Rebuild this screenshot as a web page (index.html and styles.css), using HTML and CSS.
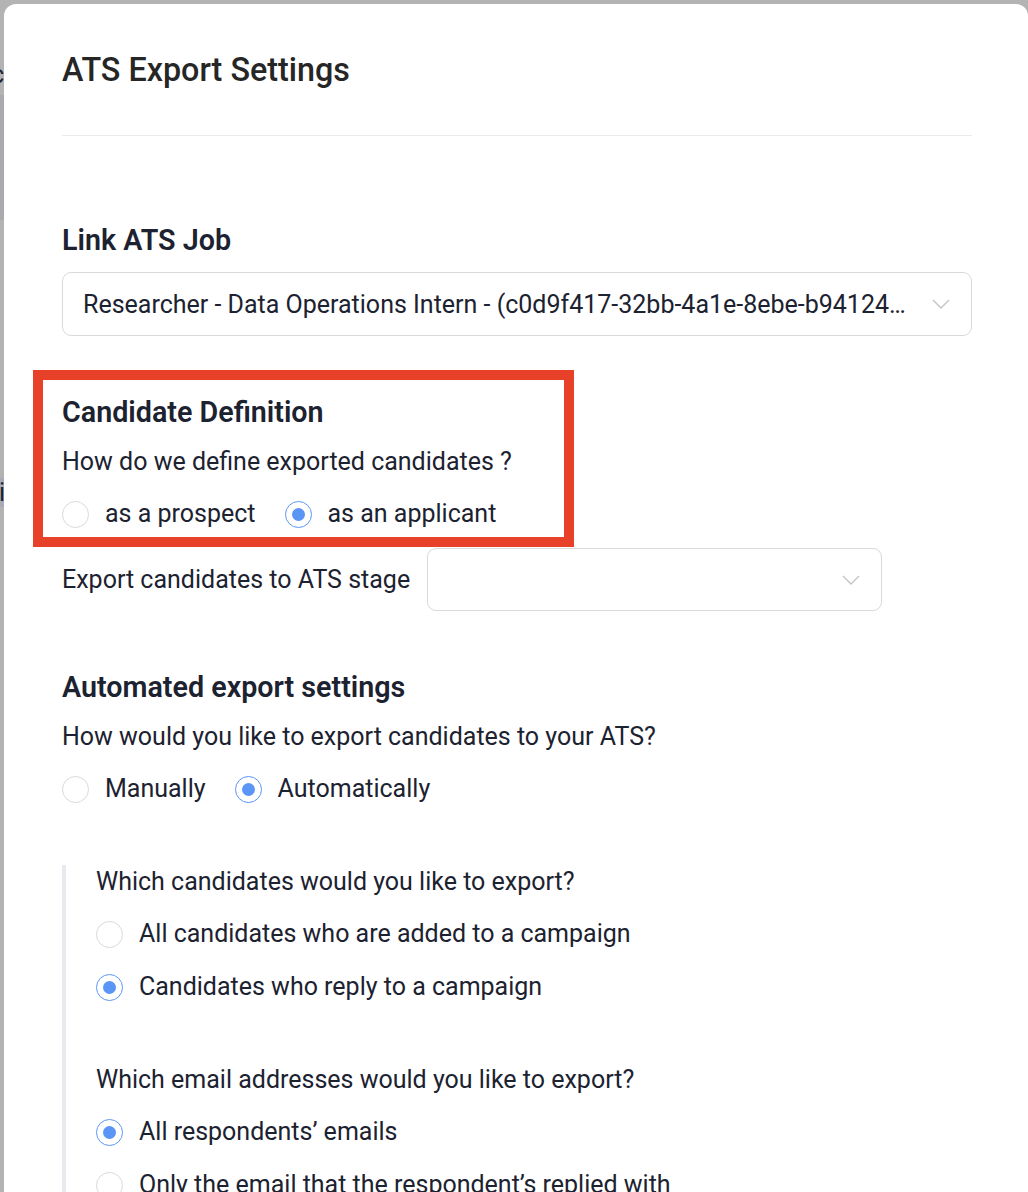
FILE: index.html
```html
<!DOCTYPE html>
<html>
  <head>
    <meta charset="utf-8">
    <title>ATS Export Settings</title>
    <link rel="stylesheet" href="styles.css">
  </head>
  <body>
    <div class="backdrop">
      <span class="backdrop-c">c</span>
      <span class="backdrop-i">i</span>
    </div>
    <div class="modal">
      <div class="modal-header">
        <h1 class="modal-title">ATS Export Settings</h1>
      </div>
      <div class="modal-body">
        <section class="block">
          <h2 class="block-title">Link ATS Job</h2>
          <div class="select select-wide">
            <span class="select-value">Researcher - Data Operations Intern - (c0d9f417-32bb-4a1e-8ebe-b94124a7d1e3)</span>
            <svg class="chevron" width="18" height="10" viewBox="0 0 18 10"><path d="M1 1 L9 9 L17 1" fill="none" stroke="#c4c4c4" stroke-width="1.4"/></svg>
          </div>
        </section>

        <section class="block block-flagged">
          <h2 class="block-title">Candidate Definition</h2>
          <p class="question">How do we define exported candidates ?</p>
          <div class="radio-group">
            <label class="radio"><span class="radio-dot"></span>as a prospect</label>
            <label class="radio checked"><span class="radio-dot"></span>as an applicant</label>
          </div>
        </section>

        <div class="stage-row">
          <span class="stage-label">Export candidates to ATS stage</span>
          <div class="select select-stage">
            <span class="select-value"></span>
            <svg class="chevron" width="18" height="10" viewBox="0 0 18 10"><path d="M1 1 L9 9 L17 1" fill="none" stroke="#c4c4c4" stroke-width="1.4"/></svg>
          </div>
        </div>

        <section class="block block-auto">
          <h2 class="block-title">Automated export settings</h2>
          <p class="question">How would you like to export candidates to your ATS?</p>
          <div class="radio-group">
            <label class="radio"><span class="radio-dot"></span>Manually</label>
            <label class="radio checked"><span class="radio-dot"></span>Automatically</label>
          </div>
        </section>

        <div class="nested">
          <p class="question">Which candidates would you like to export?</p>
          <div class="radio-list">
            <label class="radio"><span class="radio-dot"></span>All candidates who are added to a campaign</label>
            <label class="radio checked"><span class="radio-dot"></span>Candidates who reply to a campaign</label>
          </div>
          <p class="question question-spaced">Which email addresses would you like to export?</p>
          <div class="radio-list">
            <label class="radio checked"><span class="radio-dot"></span>All respondents’ emails</label>
            <label class="radio"><span class="radio-dot"></span>Only the email that the respondent’s replied with</label>
          </div>
        </div>
      </div>
    </div>
  </body>
</html>
```
FILE: styles.css
```css
:root {
  --color-text: #1c2230;
  --color-title: #262626;
  --color-border: #d9d9d9;
  --color-divider: #ebebeb;
  --color-primary: #5b95f5;
  --color-flag: #e8412a;
  --color-nested: #e8e9ee;
  --color-backdrop: #b3b3b3;
}

html, body {
  height: 100%;
}

body {
  margin: 0;
  background: var(--color-backdrop);
  font-family: Roboto, "Liberation Sans", sans-serif;
  color: var(--color-text);
  overflow: hidden;
}

.backdrop {
  position: absolute;
  left: 0;
  top: 0;
  width: 4px;
  height: 100%;
}

.backdrop::before {
  content: "";
  position: absolute;
  left: 0;
  top: 95px;
  width: 4px;
  height: 125px;
  background: #a9aaae;
}

.backdrop-c, .backdrop-i {
  position: absolute;
  font-size: 25px;
  color: var(--color-text);
}

.backdrop-c {
  left: -9px;
  top: 60px;
}

.backdrop-i {
  left: -3px;
  top: 478px;
  background: #a7abb6;
  padding: 0 2px;
}

.modal {
  position: relative;
  margin: 4px 0 0 4px;
  width: 1024px;
  min-height: 1188px;
  background: white;
  border-radius: 12px 12px 0 0;
  padding: 0 56px 0 58px;
  box-sizing: border-box;
}

.modal-header {
  padding: 46px 0 45px;
  border-bottom: 1px solid var(--color-divider);
}

.modal-title {
  margin: 0;
  font-size: 32.3px;
  line-height: 40px;
  font-weight: 500;
  color: var(--color-title);
}

.modal-body {
  display: flex;
  flex-direction: column;
  padding-top: 88px;
}

.block {
  display: flex;
  flex-direction: column;
}

.block-title {
  margin: 0;
  font-size: 28.7px;
  line-height: 32px;
  font-weight: 600;
}

.question {
  margin: 19px 0 0;
  font-size: 25px;
  line-height: 30px;
}

.select {
  display: flex;
  align-items: center;
  height: 64px;
  border: 1px solid var(--color-border);
  border-radius: 9px;
  box-sizing: border-box;
  padding: 0 21px 0 20px;
  font-size: 25px;
}

.select-wide {
  margin-top: 16px;
}

.select-value {
  flex: 1;
  min-width: 0;
  white-space: nowrap;
  overflow: hidden;
  text-overflow: ellipsis;
}

.chevron {
  flex: none;
  margin-left: 20px;
}

.block-flagged {
  position: relative;
  margin-top: 60px;
}

.block-flagged::before {
  content: "";
  position: absolute;
  left: -29px;
  top: -26px;
  bottom: -18px;
  width: 541px;
  border: 10px solid var(--color-flag);
  box-sizing: border-box;
  pointer-events: none;
}

.radio-group {
  display: flex;
  gap: 29px;
  margin-top: 22px;
}

.radio-list {
  display: flex;
  flex-direction: column;
  gap: 23px;
  margin-top: 22px;
}

.radio {
  display: flex;
  align-items: center;
  gap: 16px;
  font-size: 25px;
  line-height: 30px;
}

.radio-dot {
  position: relative;
  width: 27px;
  height: 27px;
  border: 1px solid var(--color-border);
  border-radius: 50%;
  box-sizing: border-box;
  background: white;
}

.radio.checked .radio-dot {
  border-color: var(--color-primary);
}

.radio.checked .radio-dot::after {
  content: "";
  position: absolute;
  left: 6px;
  top: 6px;
  width: 13px;
  height: 13px;
  border-radius: 50%;
  background: var(--color-primary);
}

.stage-row {
  display: flex;
  align-items: center;
  gap: 17px;
  margin-top: 19px;
  font-size: 25px;
}

.select-stage {
  width: 455px;
  height: 63px;
}

.block-auto {
  margin-top: 60px;
}

.nested {
  margin-top: 61px;
  border-left: 4px solid var(--color-nested);
  padding: 2px 0 0 30px;
  display: flex;
  flex-direction: column;
}

.nested .question:first-child {
  margin-top: 0;
}

.question-spaced {
  margin-top: 63px;
}
```
